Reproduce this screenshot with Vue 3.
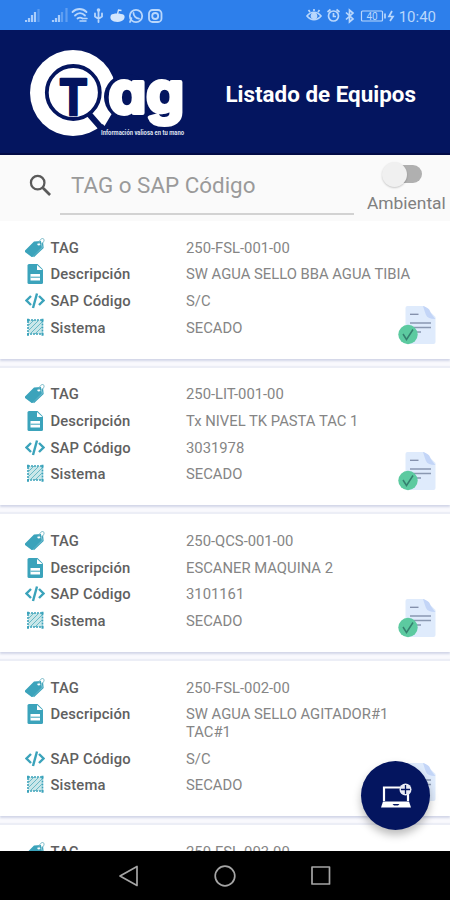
<template>
  <div class="screen">
    <div class="status-bar">
      <svg class="status-left" viewBox="0 0 140 30" fill="none">
        <g stroke="#a9cdfb" stroke-width="2.200">
          <path d="M1 22v-2M4 22v-4M7 22v-7M10 22V12" />
          <path d="M13.500 22V9" opacity=".35" />
          <path d="M28 22v-2M31 22v-4M34 22v-7" />
          <path d="M37 22V12M41.500 22V8" opacity=".4" />
        </g>
        <g stroke="#b9d7fc" stroke-width="1.800" stroke-linecap="round">
          <path d="M47.500 12c4-4 10-4 14 0M50 15.500c3-3 7-3 10 0M52.500 18.500c2-1.500 3-1.500 5 0" />
          <path d="M55 21h6M58 18.500h4" stroke-width="1.500" />
          <path d="M73.500 10v12M70 13.500v3l3.500 2.500 3.500-2.500v-3" />
          <circle cx="111" cy="16" r="6.200" />
          <path d="M105 22l1.400-3.800M108.500 13c0 3 2.500 5.500 5.500 5.700" />
          <rect x="124" y="10" width="12.500" height="12" rx="3.500" />
          <circle cx="130.200" cy="16" r="3" />
        </g>
        <circle cx="73.500" cy="10" r="1.800" fill="#b9d7fc" />
        <path d="M86 15c2-2 10-2 13 0 2 3-1 7-6.500 7S84 19 86 15z" fill="#d3e6fd" />
        <path d="M92.500 14l1-4 3 .5" stroke="#d3e6fd" stroke-width="1.300" />
      </svg>
      <div class="status-right">
        <svg class="status-icons" viewBox="0 0 90 30" fill="none" stroke="#b9d7fc" stroke-width="1.700">
          <path d="M-1 16c4-5 10-5 14 0-4 5-10 5-14 0zM2 12L.5 10M6 11V9M10 12l1.500-2" />
          <circle cx="6" cy="16" r="2.500" fill="#b9d7fc" />
          <circle cx="25.500" cy="16" r="5" />
          <path d="M25.500 13v3.500h2.500M19.500 12l3-2.500M31.500 12l-3-2.500" />
          <path d="M38 12.500l7 6.500-3.500 3V10l3.500 3-7 6.500" />
          <rect x="53.500" y="11" width="21" height="10" rx="1" stroke-width="1.200" />
          <path d="M77 13.500v5" />
          <path d="M84 11l-3 5.500h4L82 21" />
          <text x="64" y="19.700" text-anchor="middle" class="battery-text">40</text>
        </svg>
        <span class="clock">10:40</span>
      </div>
    </div>

    <header class="header">
      <svg class="logo" viewBox="0 0 160 92">
        <circle cx="45" cy="45" r="43" fill="#fff" />
        <circle cx="45.300" cy="44.500" r="26.500" fill="#fff" stroke="#04155f" stroke-width="3.800" />
        <path d="M61 66L75 82" stroke="#04155f" stroke-width="6" />
        <path d="M66 66L76.500 78L86 62L80 54z" fill="#fff" />
        <text transform="translate(45.300 67) scale(.88 1)" class="logo-t" text-anchor="middle">T</text>
        <circle cx="99" cy="49" r="23" fill="#04155f" />
        <text x="80.500" y="64.500" class="logo-ag" textLength="75.500" lengthAdjust="spacingAndGlyphs">ag</text>
        <text x="73" y="87" class="logo-sub" textLength="83" lengthAdjust="spacingAndGlyphs">Información valiosa en tu mano</text>
      </svg>
      <h1>Listado de Equipos</h1>
    </header>

    <div class="search">
      <svg class="search-icon" viewBox="0 0 24 24" fill="none" stroke="#5a5a5a" stroke-width="2">
        <circle cx="9.500" cy="9.500" r="6" />
        <path d="M14 14L20.500 20.500" stroke-width="2.400" />
      </svg>
      <input v-model="query" type="text" placeholder="TAG o SAP Código" />
      <div class="toggle" @click="ambiental = !ambiental">
        <div :class="['switch', { on: ambiental }]"><span></span></div>
        <label>Ambiental</label>
      </div>
    </div>

    <main class="list">
      <article v-for="item in filtered" :key="item.tag" class="card">
        <div class="row">
          <svg class="icon" viewBox="0 0 20 20">
            <path d="M0 12.500L9 3.500l7-.5 1 6.500-9 9q-1 1-2 0L0 14q-.8-.8 0-1.500z" fill="#3ba3bb" />
            <path d="M8.500 18.700l9.500-9-.5-5" fill="none" stroke="#3ba3bb" stroke-width="1.300" />
            <circle cx="13.800" cy="6.200" r="1.300" fill="#fff" />
            <path d="M13.800 6c.5-5 4-6.500 5-4.800s-1 4.300-4 5.800" fill="none" stroke="#72b6c5" />
          </svg>
          <b>TAG</b><span>{{ item.tag }}</span>
        </div>
        <div class="row">
          <svg class="icon" viewBox="0 0 20 20">
            <path d="M4 0h8.500L18 5.500V18.500q0 1.500-1.500 1.500H4q-1.500 0-1.500-1.500v-17Q2.500 0 4 0z" fill="#3ba3bb" />
            <path d="M12 1v5h5.500M5.500 10h9.500v6.500H5.500z" fill="#fff" />
            <path d="M5.500 13.200H15" stroke="#3ba3bb" />
          </svg>
          <b>Descripción</b><span>{{ item.desc }}</span>
        </div>
        <div class="row">
          <svg class="icon" viewBox="0 0 20 20" fill="none" stroke="#3ba3bb" stroke-width="2.400">
            <path d="M6 5L1.500 9.500 6 14M14 5l4.500 4.500L14 14M12 2.500L8 17" />
          </svg>
          <b>SAP Código</b><span>{{ item.sap }}</span>
        </div>
        <div class="row">
          <svg class="icon" viewBox="0 0 20 20" fill="none" stroke="#3ba3bb">
            <rect x="3" y="2" width="14.500" height="14" fill="#c9e7e9" stroke-dasharray="2 1" stroke-width="1.600" />
            <path d="M3 8l6-6M3 13L14 2M5 16L17 4M10 16l7-7" stroke="#68b8c6" />
            <path d="M2 2h2M16.500 2h2M2 16.500h2M16.500 16.500h2" stroke-width="2.500" />
          </svg>
          <b>Sistema</b><span>{{ item.sistema }}</span>
        </div>
        <svg class="doc" viewBox="0 0 38 39" fill="none">
          <path d="M9.500 0H26l11.500 11v25q0 2-2 2h-26q-2 0-2-2V2q0-2 2-2z" fill="#dfebfc" />
          <path d="M25 0q6 2 7 5t5.500 8q-8 0-9.500-4t-3-9z" fill="#c3d5f7" />
          <path d="M12 8.300h8.500" stroke="#808da8" stroke-width="1.300" />
          <path d="M12 17h21M14 21.500h19M18 26h5" stroke="#8a98b1" stroke-width="1.700" />
          <circle cx="10" cy="28.500" r="9.700" fill="#5ccaa0" />
          <path d="M5 28l3.500 5.500L15 23.500" stroke="#35806f" stroke-width="1.500" />
        </svg>
      </article>
    </main>

    <button class="fab">
      <svg viewBox="0 0 32 26" fill="none">
        <path d="M4 18V4.500h24V18" stroke="#fff" stroke-width="2.200" />
        <path d="M3 18.500h26l2 6H1z" fill="#fff" />
        <path d="M12.500 21h7l-1.500 1.500h-4z" fill="#04155f" />
        <circle cx="25.500" cy="6.500" r="6" fill="#e8eaf4" />
        <path d="M25.500 2v9M21 6.500h9" stroke="#04155f" stroke-width="1.300" />
      </svg>
    </button>

    <nav class="nav-bar">
      <svg viewBox="0 0 24 24"><path d="M20 2.500v19L3 12z" /></svg>
      <svg viewBox="0 0 24 24"><circle cx="12" cy="12" r="9.800" /></svg>
      <svg viewBox="0 0 24 24"><rect x="3" y="3" width="17.500" height="17" /></svg>
    </nav>
  </div>
</template>

<script setup>
import { ref, computed } from 'vue'

const query = ref('')
const ambiental = ref(false)

const equipos = [
  { tag: '250-FSL-001-00', desc: 'SW AGUA SELLO BBA AGUA TIBIA', sap: 'S/C', sistema: 'SECADO' },
  { tag: '250-LIT-001-00', desc: 'Tx NIVEL TK PASTA TAC 1', sap: '3031978', sistema: 'SECADO' },
  { tag: '250-QCS-001-00', desc: 'ESCANER MAQUINA 2', sap: '3101161', sistema: 'SECADO' },
  { tag: '250-FSL-002-00', desc: 'SW AGUA SELLO AGITADOR#1 TAC#1', sap: 'S/C', sistema: 'SECADO' },
  { tag: '250-FSL-003-00', desc: '', sap: '', sistema: '' }
]

const filtered = computed(() => {
  const q = query.value.toLowerCase()
  return equipos.filter(e => e.tag.toLowerCase().includes(q) || e.sap.toLowerCase().includes(q))
})
</script>

<style>
body { overflow: hidden; }
</style>

<style scoped>
.screen {
  position: relative;
  width: 450px; height: 900px;
  display: flex; flex-direction: column;
  overflow: hidden;
  background: #fff;
  font-family: Roboto, sans-serif;
}
.status-bar {
  height: 30px; flex: none;
  display: flex; justify-content: space-between;
  padding: 0 14px 0 25px;
  background: #2d7feb;
}
.status-left { width: 140px; height: 30px; }
.status-right { display: flex; align-items: center; gap: 1px; }
.status-icons { width: 90px; height: 30px; overflow: visible; }
.battery-text { font-size: 10px; fill: #b9d7fc; stroke: none; }
.clock { color: #b9d7fc; font-size: 15px; line-height: 30px; padding-top: 3px; }
.header {
  height: 125px; flex: none; box-sizing: border-box;
  display: flex; align-items: center;
  padding: 5px 0 0 28px;
  background: #04155f;
  border-bottom: 2px solid #020b46;
}
.logo { width: 160px; height: 92px; flex: none; overflow: visible; }
.logo-t { font-size: 50px; font-weight: 700; fill: #04155f; stroke: #04155f; stroke-width: 2.5; stroke-linejoin: round; }
.logo-ag {
  font-family: Inter, sans-serif; font-size: 57px; font-weight: 700;
  font-feature-settings: 'cv11';
  fill: #fff; stroke: #fff; stroke-width: 4; stroke-linejoin: round;
}
.logo-sub { font-size: 6.5px; font-weight: 700; fill: #dfe2f0; }
h1 { margin: 0 0 0 37.5px; color: #fff; font-size: 22.4px; font-weight: 700; white-space: nowrap; }
.search {
  height: 66px; flex: none;
  display: flex; align-items: flex-start;
  background: #fafafa;
}
.search-icon { width: 27px; height: 27px; margin: 17px 0 0 27px; flex: none; }
input {
  width: 294px; height: 60px; box-sizing: border-box;
  margin-left: 6px; padding: 2px 11px 0;
  border: none; border-bottom: 2px solid #d2d2d2; outline: none;
  background: none;
  font-family: inherit; font-size: 22.4px; color: #555;
}
input::placeholder { color: #9a9a9a; opacity: 1; }
.toggle { display: flex; flex-direction: column; margin-left: 13px; padding-top: 10px; }
.switch {
  width: 35px; height: 18px; margin-left: 20px;
  display: flex; align-items: center;
  border-radius: 10px;
  background: #b0b0b0;
}
.switch span { width: 25px; height: 25px; flex: none; margin-left: -5px; border-radius: 50%; background: #f0f0f0; box-shadow: 0 1px 2px #0003; }
.switch.on span { margin-left: 15px; }
.toggle label { margin-top: 9px; font-size: 17.4px; line-height: 22px; color: #808080; }
.list { flex: 1; min-height: 0; overflow: hidden; background: #f9f9fd; }
.card {
  position: relative;
  box-sizing: border-box;
  min-height: 137.5px; margin-bottom: 9.2px;
  padding: 18.5px 22px 21px 25px;
  display: flex; flex-direction: column; gap: 9.1px;
  background: #fff;
  box-shadow: 0 2px 2px #d2d6e8, 0 -1px 1px 1px #eceef6;
}
.row {
  display: grid; grid-template-columns: 20px 130px 229px; column-gap: 5.5px;
  align-items: start;
  font-size: 14.8px; line-height: 17.6px;
}
.row b { font-weight: 500; color: #606060; letter-spacing: .14px; }
.row span { color: #858585; }
.icon { width: 20px; height: 20px; margin: -2px 0 -1px; }
.doc { position: absolute; right: 14px; bottom: 14px; width: 38px; height: 39px; }
.fab {
  position: absolute; left: 361px; top: 761px;
  width: 69px; height: 69px;
  display: flex; align-items: center; justify-content: center;
  padding: 0; border: none; border-radius: 50%;
  background: #04155f;
  box-shadow: 0 5px 9px #0004;
}
.fab svg { width: 32px; height: 26px; }
.nav-bar {
  height: 49px; flex: none;
  display: flex; align-items: center; justify-content: center; gap: 72px;
  background: #000;
}
.nav-bar svg { width: 24px; height: 24px; fill: none; stroke: #a5a5a5; stroke-width: 1.7; stroke-linejoin: round; }
</style>
